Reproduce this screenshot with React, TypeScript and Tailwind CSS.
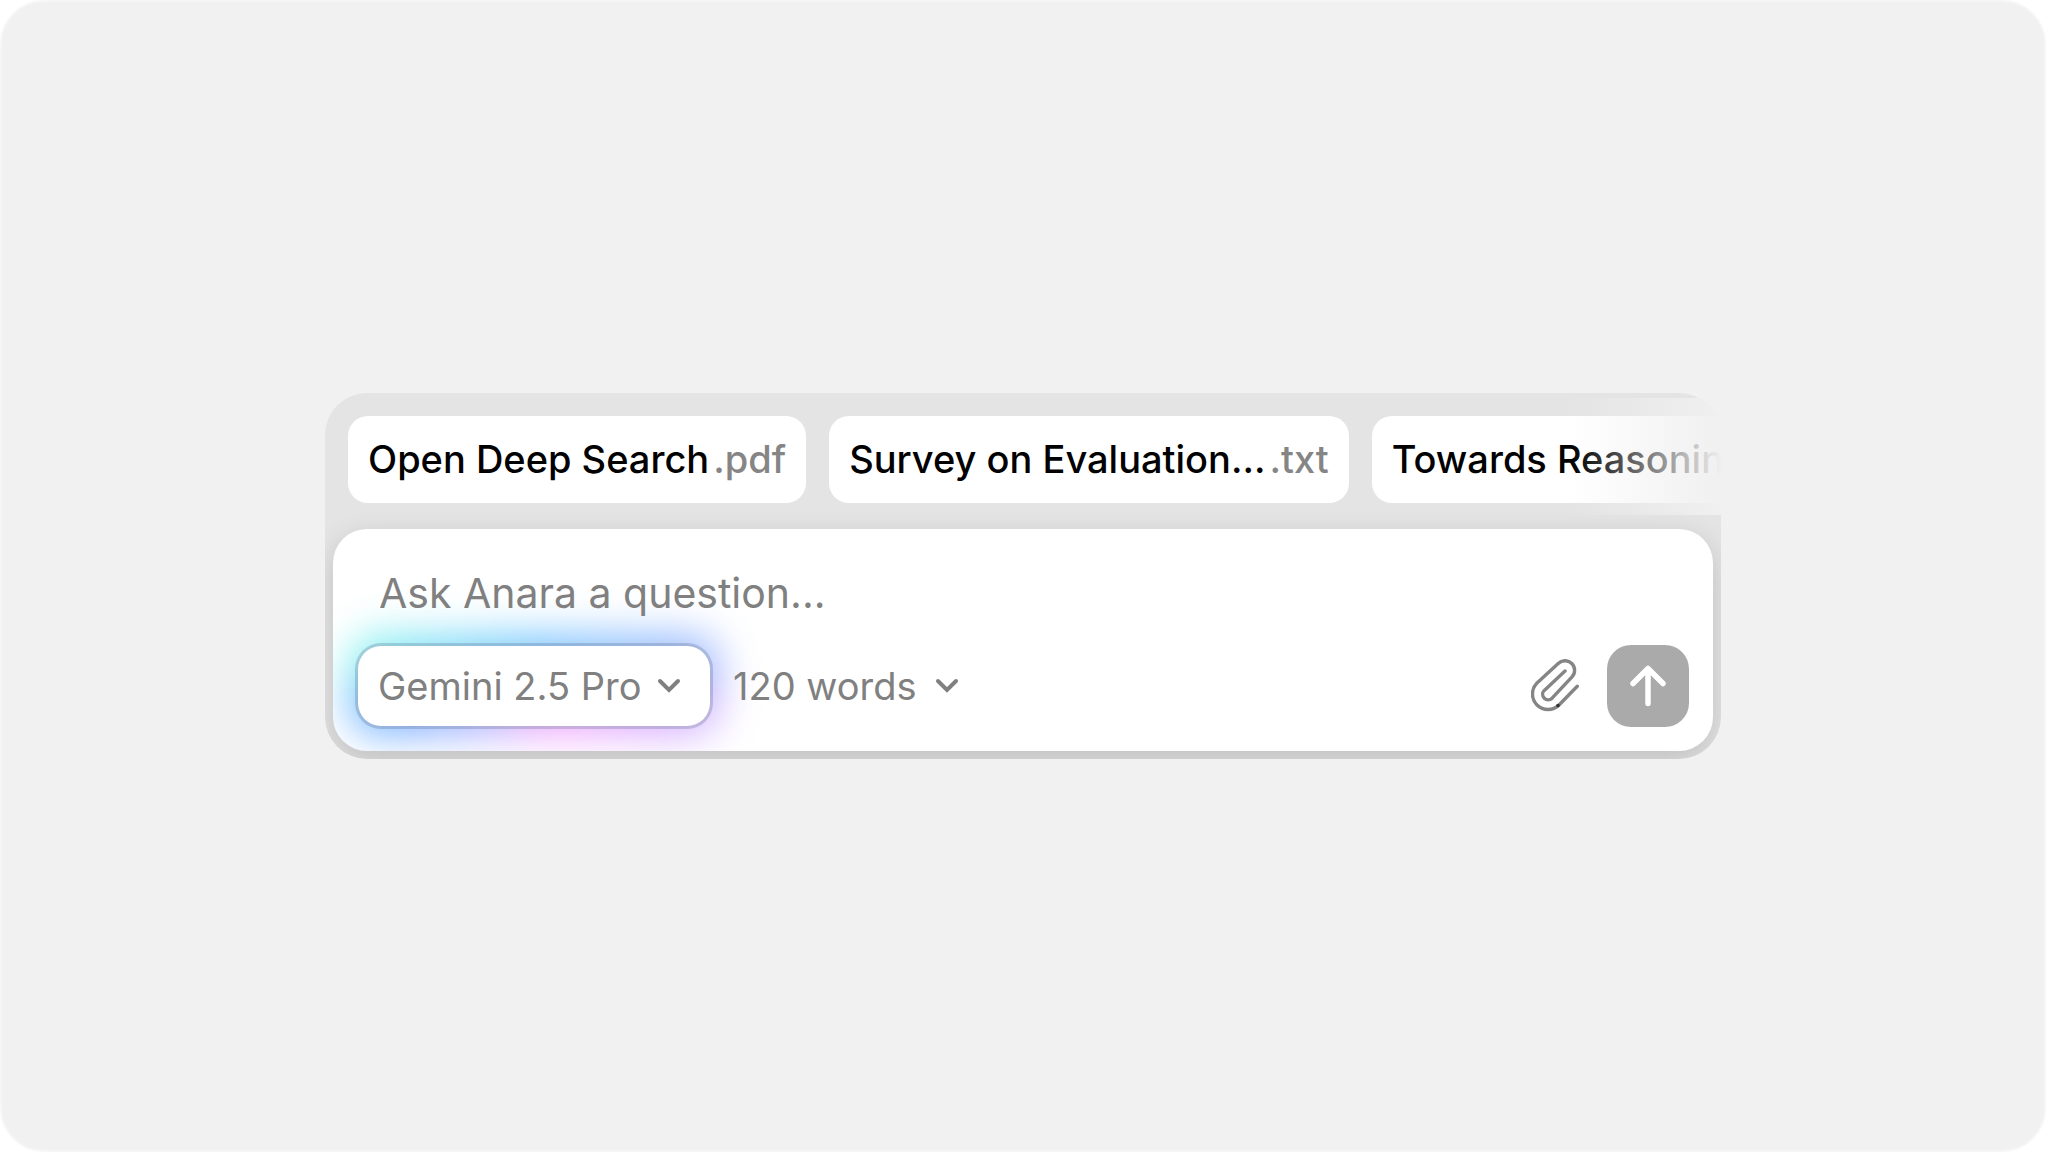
import {useState} from "react";
import type {FormEvent} from "react";

type Attachment = {
    name: string;
    extension: string;
}

type PickerProps = {
    label: string;
    options: string[];
    className: string;
    chevronClassName: string;
}

const attachments: Attachment[] = [
    {name: "Open Deep Search", extension: ".pdf"},
    {name: "Survey on Evaluation...", extension: ".txt"},
    {name: "Towards Reasoning", extension: ".pdf"},
];

const PaperclipIcon = () => (
    <svg className="w-12 h-[54px]" viewBox="0 0 48 54" fill="none" aria-hidden="true">
        <path
            d="M46.3 27.3 L28 46 A15.5 15.5 0 0 1 6 24 L27.2 4.5 A9.6 9.6 0 0 1 40.8 18.1 L21.1 39.2 A5.5 5.5 0 0 1 13.3 31.4 L34 12"
            stroke="#858585"
            strokeWidth="3.4"
            strokeLinecap="round"
            strokeLinejoin="round"
        />
        <circle cx="27" cy="46.6" r="1.8" fill="#333333" />
    </svg>
)

const ArrowUpIcon = () => (
    <svg className="w-9 h-[42px]" viewBox="0 0 36 42" fill="none" aria-hidden="true">
        <path d="M18 38.5 V4 M3 18.5 L18 3.5 L33 18.5" stroke="white" strokeWidth="5.5" strokeLinecap="round" strokeLinejoin="round" />
    </svg>
)

const Picker = ({label, options, className, chevronClassName}: PickerProps) => (
    <div className="relative flex items-center">
        <select aria-label={label} className={className}>
            {options.map(option => (
                <option key={option}>{option}</option>
            ))}
        </select>
        <svg className={chevronClassName} viewBox="0 0 24 24" fill="none" aria-hidden="true">
            <path d="M3 7 L12 16 L21 7" stroke="#808080" strokeWidth="4" strokeLinecap="round" />
        </svg>
    </div>
)

export default function App() {
    const [question, setQuestion] = useState("");

    function handleSubmit(e: FormEvent) {
        e.preventDefault();
        setQuestion("");
    }

    return (
        <main className="flex min-h-screen items-center justify-center rounded-[44px] border-2 border-[#f6f6f6] bg-[#f1f1f1] px-8 font-['Inter',sans-serif]">
            <section className="relative w-full max-w-[1396px] overflow-hidden rounded-[42px] bg-[#e4e4e4] px-2 pb-2">
                <ul className="flex gap-[23px] pt-[23px] pb-[26px] pl-[15px]">
                    {attachments.map(file => (
                        <li
                            key={file.name}
                            className="flex h-[87px] shrink-0 items-center gap-1 whitespace-nowrap rounded-[20px] bg-white px-5 text-[38px] font-medium text-black"
                        >
                            {file.name}
                            <span className="text-[#858585]">{file.extension}</span>
                        </li>
                    ))}
                </ul>
                <div className="pointer-events-none absolute top-[5px] right-0 h-[117px] w-[150px] bg-linear-to-r from-[#f0f0f0]/0 to-[#f0f0f0]" />

                <form
                    onSubmit={handleSubmit}
                    className="relative rounded-[34px] bg-white px-[22px] pt-10 pb-[22px] shadow-[0_10px_30px_rgba(0,0,0,0.16)]"
                >
                    {/* glow of the model picker, kept inside the card */}
                    <div className="pointer-events-none absolute inset-0 overflow-hidden rounded-[34px]">
                        <div className="absolute bottom-4 left-4 flex h-[100px] w-[370px] flex-col overflow-hidden rounded-[30px] opacity-80 blur-[20px]">
                            <div className="flex-1 bg-linear-to-r from-[#6df5ea] via-[#55b8ff] to-[#86a4ff]" />
                            <div className="flex-1 bg-[linear-gradient(90deg,#4fa8ff_0%,#5ea0ff_15%,#a0a4ff_36%,#f292fb_54%,#d898ff_76%,#c0a0ff_100%)]" />
                        </div>
                    </div>

                    <input
                        type="text"
                        aria-label="Question"
                        placeholder="Ask Anara a question..."
                        value={question}
                        onChange={e => setQuestion(e.target.value)}
                        className="relative block h-[50px] w-full bg-transparent px-6 text-[41px] text-black outline-none placeholder:text-[#808080]"
                    />

                    <div className="relative mt-6 flex items-center justify-between">
                        <div className="flex items-center gap-5">
                            <Picker
                                label="Model"
                                options={["Gemini 2.5 Pro"]}
                                className="h-[86px] appearance-none rounded-[26px] border-3 border-[#4a5a80]/25 bg-white bg-clip-padding pr-[68px] pl-5 text-[38px] text-[#808080] outline-none"
                                chevronClassName="pointer-events-none absolute right-8 size-6"
                            />
                            <Picker
                                label="Answer length"
                                options={["120 words"]}
                                className="h-[86px] appearance-none bg-transparent pr-[42px] text-[38px] text-[#808080] outline-none"
                                chevronClassName="pointer-events-none absolute right-0 size-6"
                            />
                        </div>
                        <div className="mr-0.5 flex items-center gap-7">
                            <button type="button" aria-label="Attach file">
                                <PaperclipIcon />
                            </button>
                            <button
                                type="submit"
                                aria-label="Send"
                                className="flex size-[82px] items-center justify-center rounded-[24px] bg-[#aaaaaa]"
                            >
                                <ArrowUpIcon />
                            </button>
                        </div>
                    </div>
                </form>
            </section>
        </main>
    );
}
